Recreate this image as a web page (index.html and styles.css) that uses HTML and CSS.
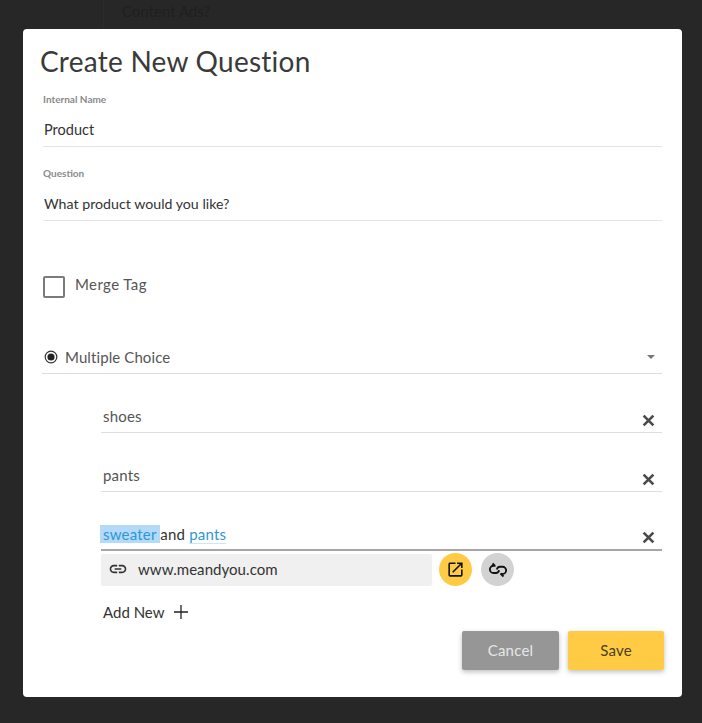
FILE: index.html
```html
<!DOCTYPE html>
<html lang="en">
<head>
<meta charset="utf-8">
<title>Create New Question</title>
<link rel="stylesheet" href="styles.css">
</head>
<body>
<div class="backdrop-text">Content Ads?</div>
<div class="backdrop-line"></div>
<main class="modal">
  <h1 class="title">Create New Question</h1>
  <div class="field field-name">
    <div class="label">Internal Name</div>
    <div class="value value-name">Product</div>
  </div>
  <div class="field field-question">
    <div class="label">Question</div>
    <div class="value value-question">What product would you like?</div>
  </div>
  <div class="merge">
    <span class="checkbox"></span>
    <span class="merge-label">Merge Tag</span>
  </div>
  <div class="select">
    <svg class="radio" width="14" height="14" viewBox="0 0 14 14"><circle cx="7" cy="7" r="5.8" fill="none" stroke="#333" stroke-width="1.2"/><circle cx="7" cy="7" r="3.6" fill="#222"/></svg>
    <span class="select-label">Multiple Choice</span>
    <span class="caret"></span>
  </div>
  <div class="options">
    <div class="option">
      <span class="option-text">shoes</span>
      <svg class="close" width="13" height="13" viewBox="0 0 12 12"><path d="M1.500 1.500l9 9M10.500 1.500l-9 9" stroke="#4a4a4a" stroke-width="2.400" fill="none"/></svg>
    </div>
    <div class="option">
      <span class="option-text">pants</span>
      <svg class="close" width="13" height="13" viewBox="0 0 12 12"><path d="M1.500 1.500l9 9M10.500 1.500l-9 9" stroke="#4a4a4a" stroke-width="2.400" fill="none"/></svg>
    </div>
    <div class="option option-active">
      <span class="option-text"><span class="selected link">sweater </span><span class="plain">and</span> <span class="link underlined">pants</span></span>
      <svg class="close" width="13" height="13" viewBox="0 0 12 12"><path d="M1.500 1.500l9 9M10.500 1.500l-9 9" stroke="#4a4a4a" stroke-width="2.400" fill="none"/></svg>
    </div>
    <div class="link-row">
      <div class="url-box">
        <svg width="20" height="20" viewBox="0 0 24 24"><path fill="#333" d="M3.900 12c0-1.710 1.390-3.100 3.100-3.100h4V7H7c-2.760 0-5 2.240-5 5s2.240 5 5 5h4v-1.900H7c-1.710 0-3.100-1.390-3.100-3.100zM8 13h8v-2H8v2zm9-6h-4v1.900h4c1.710 0 3.100 1.390 3.100 3.100s-1.390 3.100-3.100 3.100h-4V17h4c2.760 0 5-2.240 5-5s-2.240-5-5-5z"/></svg>
        <span class="url">www.meandyou.com</span>
      </div>
      <span class="circle circle-open">
        <svg width="19" height="19" viewBox="0 0 24 24"><path fill="#111" d="M19 19H5V5h7V3H5c-1.110 0-2 .9-2 2v14c0 1.100.89 2 2 2h14c1.100 0 2-.9 2-2v-7h-2v7zM14 3v2h3.590l-9.830 9.830 1.410 1.410L19 6.410V10h2V3h-7z"/></svg>
      </span>
      <span class="circle circle-unlink">
        <svg width="18" height="18" viewBox="0 0 18 18"><path fill="none" stroke="#111" stroke-width="1.900" d="M6.500 4.800H4.500a3.600 3.600 0 0 0 0 7.200H7c1.800 0 2.800-1.400 3.200-2.700M11.500 13h2a3.600 3.600 0 0 0 0-7.200H11C9.200 5.800 8.200 7.200 7.800 8.500M3.500 2.500l2.500 2.500M11.500 12.500l3 3"/></svg>
      </span>
    </div>
    <div class="add-new">
      <span>Add New</span>
      <svg class="plus" width="16" height="16" viewBox="0 0 16 16"><path d="M8 1v14M1 8h14" stroke="#222" stroke-width="1.300" fill="none"/></svg>
    </div>
  </div>
  <div class="actions">
    <button class="btn btn-cancel">Cancel</button>
    <button class="btn btn-save">Save</button>
  </div>
</main>
</body>
</html>
```
FILE: styles.css
```css
* { box-sizing: border-box; }
html, body { margin: 0; height: 723px; overflow: hidden; }
body {
  background: #272727;
  padding: 29px 20px 26px 23px;
  font-family: "Lato", "Liberation Sans", sans-serif;
  color: #333;
}
.backdrop-text {
  position: absolute;
  left: 122px;
  top: 2px;
  font-size: 15px;
  color: #1f1f1f;
}
.backdrop-line {
  position: absolute;
  left: 103px;
  top: 0;
  width: 1px;
  height: 29px;
  background: #2b2b2b;
}
.modal {
  position: relative;
  width: 659px;
  height: 668px;
  background: #fff;
  border-radius: 4px;
  padding: 0 20px 0 19px;
}
.title {
  margin: 0 0 0 -2px;
  padding-top: 14px;
  height: 64px;
  font-size: 28px;
  line-height: 36px;
  font-weight: 400;
  color: #3a3a3a;
  letter-spacing: 0.25px;
}
.field { border-bottom: 1px solid #e4e4e4; margin-left: 1px; }
.field-name { height: 54px; }
.field-question { height: 54px; margin-top: 20px; }
.label {
  font-size: 10px;
  line-height: 12px;
  font-weight: 700;
  color: #8a8a8a;
}
.value {
  line-height: 20px;
  color: #333;
  margin-left: 1px;
}
.value-name { font-size: 14.500px; margin-top: 15px; }
.value-question { font-size: 14.200px; margin-top: 15px; }
.merge {
  display: flex;
  align-items: flex-start;
  gap: 10px;
  margin: 55px 0 0 1px;
  height: 22px;
}
.checkbox {
  width: 22px;
  height: 22px;
  border: 2px solid #7b7b7b;
  border-radius: 2px;
}
.merge-label { font-size: 15px; line-height: 17px; color: #555; letter-spacing: 0.4px; }
.select {
  display: flex;
  align-items: center;
  gap: 7px;
  margin-top: 48px;
  height: 28px;
  border-bottom: 1px solid #dedede;
  padding: 0 5px 5px 2px;
}
.select-label { font-size: 15px; color: #555; letter-spacing: 0.1px; flex: 1; }
.caret {
  width: 0;
  height: 0;
  border: 4.500px solid transparent;
  border-top-color: #777;
  border-bottom: 0;
  margin-right: 2px;
}
.options { margin-left: 59px; }
.option {
  display: flex;
  align-items: flex-end;
  justify-content: space-between;
  height: 59px;
  border-bottom: 1px solid #dedede;
  padding: 0 7px 0 2px;
}
.option-text { font-size: 15px; line-height: 20px; color: #555; padding-bottom: 6px; display: block; letter-spacing: 0.2px; }
.close { margin-bottom: 5px; }
.option-active { border-bottom: 2px solid #a6a6a6; }
.option-active .option-text { padding-bottom: 5px; }
.link { color: #2f97d6; }
.selected { background: #b3daf9; margin-left: -3px; padding-left: 3px; }
.plain { color: #333; }
.underlined { border-bottom: 1px solid #cfe6f5; }
.link-row { display: flex; align-items: center; margin-top: 2px; height: 33px; }
.url-box {
  display: flex;
  align-items: center;
  gap: 10px;
  width: 331px;
  height: 32px;
  background: #f0f0f0;
  border-radius: 2px;
  padding: 0 0 1px 7px;
}
.url { font-size: 15px; color: #333; letter-spacing: 0.05px; }
.circle {
  width: 33px;
  height: 33px;
  border-radius: 50%;
  display: flex;
  align-items: center;
  justify-content: center;
}
.circle-open { background: #ffcb45; margin-left: 7px; }
.circle-unlink { background: #d2d2d2; margin-left: 9px; }
.add-new {
  display: flex;
  align-items: center;
  gap: 7px;
  margin: 16px 0 0 2px;
  height: 20px;
  font-size: 15px;
  color: #333;
}
.plus { margin-left: 2px; }
.actions {
  display: flex;
  justify-content: flex-end;
  gap: 9px;
  margin: 9px -2px 0 0;
}
.btn {
  width: 97px;
  height: 39px;
  border: 0;
  border-radius: 2px;
  font: inherit;
  font-size: 15px;
  padding: 0 0 2px;
  letter-spacing: 0.2px;
  box-shadow: 0 2px 5px rgba(0, 0, 0, .25);
}
.btn-cancel { background: #969696; color: #e6e6e6; }
.btn-save { background: #ffcb45; color: #4a4022; width: 96px; }
```
